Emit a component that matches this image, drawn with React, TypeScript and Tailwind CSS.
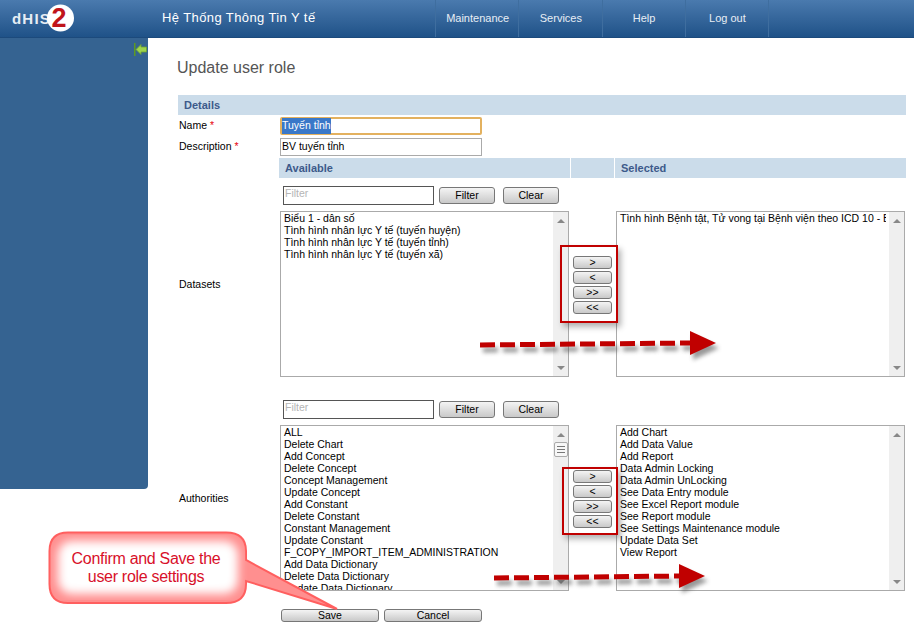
import React from 'react';

const datasetsAvailable = [
  'Biểu 1 - dân số',
  'Tình hình nhân lực Y tế (tuyến huyện)',
  'Tình hình nhân lực Y tế (tuyến tỉnh)',
  'Tình hình nhân lực Y tế (tuyến xã)',
];
const datasetsSelected = ['Tình hình Bệnh tật, Tử vong tại Bệnh viện theo ICD 10 - Bệnh viện'];
const authoritiesAvailable = [
  'ALL',
  'Delete Chart',
  'Add Concept',
  'Delete Concept',
  'Concept Management',
  'Update Concept',
  'Add Constant',
  'Delete Constant',
  'Constant Management',
  'Update Constant',
  'F_COPY_IMPORT_ITEM_ADMINISTRATION',
  'Add Data Dictionary',
  'Delete Data Dictionary',
  'Update Data Dictionary',
  'Add Data Element',
];
const authoritiesSelected = [
  'Add Chart',
  'Add Data Value',
  'Add Report',
  'Data Admin Locking',
  'Data Admin UnLocking',
  'See Data Entry module',
  'See Excel Report module',
  'See Report module',
  'See Settings Maintenance module',
  'Update Data Set',
  'View Report',
];
const navItems = ['Maintenance', 'Services', 'Help', 'Log out'];

// old style grey button
const GreyButton = ({ label, className }: { label: string; className: string }) => (
  <button className={`flex items-center justify-center rounded-[3px] border border-[#777] bg-gradient-to-b from-[#f4f4f4] to-[#c9c9c9] text-[10.5px] leading-none text-black ${className}`}>
    {label}
  </button>
);

const ListBox = ({ items, thumb }: { items: string[]; thumb?: boolean }) => (
  <div className="flex h-[166px] w-[289px] overflow-hidden border border-[#aaa] bg-white">
    <div className="mr-[3px] min-w-0 flex-1 overflow-hidden whitespace-nowrap pl-[3px] text-[10.5px] leading-[12px] text-black">
      {items.map((item) => (
        <div key={item}>{item}</div>
      ))}
    </div>
    <div className="flex w-[15px] shrink-0 flex-col items-center bg-[#efefef] pt-[7px] pb-[6px]">
      <div className="h-0 w-0 border-x-[4px] border-b-[4px] border-x-transparent border-b-[#888]" />
      {thumb && (
        <div className="mt-[5px] flex h-[15px] w-[14px] flex-col items-center justify-center gap-[2px] rounded-[2px] border border-[#aaa] bg-[#f7f7f7]">
          <div className="h-px w-[8px] bg-[#777]" />
          <div className="h-px w-[8px] bg-[#777]" />
          <div className="h-px w-[8px] bg-[#777]" />
        </div>
      )}
      <div className="mt-auto h-0 w-0 border-x-[4px] border-t-[4px] border-x-transparent border-t-[#888]" />
    </div>
  </div>
);

const MoveButtons = () => (
  <div className="flex flex-col gap-[2px]">
    {['>', '<', '>>', '<<'].map((label) => (
      <GreyButton key={label} label={label} className="h-[13px] w-[39px]" />
    ))}
  </div>
);

const FilterRow = () => (
  <div className="flex items-start pl-[3px]">
    <div className="h-[19px] w-[151px] border border-[#555] bg-white pl-[1px] text-[10.5px] leading-[12px] text-[#b5b5b5]">Filter</div>
    <GreyButton label="Filter" className="ml-[5px] mt-[1px] h-[17px] w-[56px]" />
    <GreyButton label="Clear" className="ml-[8px] mt-[1px] h-[17px] w-[56px]" />
  </div>
);

const DashedArrow = ({ width }: { width: number }) => {
  const dashEnd = width - 24;
  return (
    <svg width={width + 10} height="38" viewBox={`0 0 ${width + 10} 38`}>
      <g opacity="0.6" transform="translate(3 5)" style={{ filter: 'blur(2px)' }}>
        <line x1="0" y1="16" x2={dashEnd} y2="14" stroke="#555" strokeWidth="5" strokeDasharray="15 5" />
        <polygon points={`${width - 26},2 ${width},14 ${width - 26},26`} fill="#555" />
      </g>
      <line x1="0" y1="16" x2={dashEnd} y2="14" stroke="#c00000" strokeWidth="5" strokeDasharray="15 5" />
      <polygon points={`${width - 26},2 ${width},14 ${width - 26},26`} fill="#c00000" />
    </svg>
  );
};

const App = () => {
  return (
    <div className="relative h-[626px] w-[914px] overflow-hidden bg-white font-['Liberation_Sans',Arial,sans-serif]">
      <header className="flex h-[38px] border-b border-[#1c4a7c] bg-gradient-to-b from-[#4a7aae] to-[#1f5288] text-white">
        <div className="relative w-[162px] shrink-0">
          <span className="absolute left-[12px] top-[11px] text-[15px] font-bold leading-none tracking-[1.2px] text-[#e6edf4]">dHIS</span>
          <svg className="absolute left-[44px] top-[3px] overflow-visible" width="30" height="30" viewBox="0 0 30 30">
            <circle cx="16.5" cy="15" r="13.5" fill="#fff" />
            <text x="15" y="24" textAnchor="middle" fontFamily="Liberation Sans" fontWeight="bold" fontSize="27" fill="#c0141a">2</text>
          </svg>
        </div>
        <div className="w-[273px] shrink-0 pt-[11px] text-[13px] leading-[14px] tracking-[0.4px]">Hệ Thống Thông Tin Y tế</div>
        <nav className="flex border-l border-[#3f6e9f]">
          {navItems.map((item) => (
            <div key={item} className="flex w-[83.25px] items-center justify-center border-r border-[#3f6e9f] pb-[1px] pl-[1px] text-[11px] text-[#e8eef5]">
              {item}
            </div>
          ))}
        </nav>
      </header>

      <div className="flex">
        <aside className="relative h-[451px] w-[148px] shrink-0 rounded-br-[4px] bg-[#356391]">
          <svg className="absolute left-[134px] top-[5px]" width="13" height="13" viewBox="0 0 13 13">
            <rect x="0" y="0" width="1.5" height="13" fill="#5c9a22" />
            <polygon points="2,6.5 7,1.5 7,4 12.5,4 12.5,9 7,9 7,11.5" fill="#9fd44e" stroke="#6fa52e" strokeWidth="0.8" />
          </svg>
        </aside>

        <main className="min-w-0 flex-1 pl-[30px] text-[10.5px] text-black">
          <h1 className="-ml-px pt-[21px] text-[16px] leading-[18px] text-[#555]">Update user role</h1>
          <div className="mt-[18px] h-[20px] w-[728px] bg-[#cbdcea] pl-[6px] text-[11px] font-bold leading-[20px] text-[#3d5a8a]">Details</div>

          <div className="mt-[2px] flex items-center">
            <div className="w-[102px] pl-[1px]">Name <span className="text-red-600">*</span></div>
            <div className="flex h-[18px] w-[202px] items-center rounded-[2px] border-2 border-[#e3b15f] bg-white">
              <span className="bg-[#3a78c8] text-white">Tuyến tỉnh</span>
            </div>
          </div>
          <div className="mt-[3px] flex items-center">
            <div className="w-[102px] pl-[1px]">Description <span className="text-red-600">*</span></div>
            <div className="flex h-[18px] w-[202px] items-center border border-[#aaa] bg-white pl-[1px]">BV tuyến tỉnh</div>
          </div>

          <div className="mt-[2px] ml-[101px] flex h-[20px] w-[627px] gap-[1px] text-[11px] font-bold leading-[20px] text-[#3d5a8a]">
            <div className="w-[291px] bg-[#cbdcea] pl-[6px]">Available</div>
            <div className="w-[43px] bg-[#cbdcea]" />
            <div className="flex-1 bg-[#cbdcea] pl-[6px]">Selected</div>
          </div>

          <section className="ml-[102px] mt-[8px] w-[626px]">
            <FilterRow />
            <div className="mt-[6px] flex w-[625px]">
              <ListBox items={datasetsAvailable} />
              <div className="flex w-[47px] justify-center pt-[45px]"><MoveButtons /></div>
              <ListBox items={datasetsSelected} />
            </div>
          </section>

          <section className="ml-[102px] mt-[23px] w-[626px]">
            <FilterRow />
            <div className="mt-[6px] flex w-[625px]">
              <ListBox items={authoritiesAvailable} thumb />
              <div className="flex w-[47px] justify-center pt-[45px]"><MoveButtons /></div>
              <ListBox items={authoritiesSelected} />
            </div>
          </section>

          <div className="ml-[103px] mt-[18px] flex gap-[5px]">
            <GreyButton label="Save" className="h-[13px] w-[98px]" />
            <GreyButton label="Cancel" className="h-[13px] w-[98px]" />
          </div>
        </main>
      </div>

      {/* row labels sit beside the tall list rows */}
      <div className="absolute left-[179px] top-[278px] text-[10.5px] leading-[13px] text-black">Datasets</div>
      <div className="absolute left-[179px] top-[492px] text-[10.5px] leading-[13px] text-black">Authorities</div>

      {/* annotations drawn over the screenshot */}
      <div className="absolute left-[560px] top-[245px] h-[78px] w-[58px] border-2 border-[#c00000] shadow-[3px_4px_6px_rgba(0,0,0,0.3)]" />
      <div className="absolute left-[562px] top-[467px] h-[68px] w-[56px] border-2 border-[#c00000] shadow-[3px_4px_6px_rgba(0,0,0,0.3)]" />
      <div className="absolute left-[480px] top-[329px]"><DashedArrow width={236} /></div>
      <div className="absolute left-[494px] top-[562px]"><DashedArrow width={211} /></div>

      <div className="absolute left-[48px] top-[531px] h-[82px] w-[292px]">
        <svg width="292" height="82" viewBox="0 0 292 82">
          <defs>
            <filter id="calloutGlow" x="-10%" y="-10%" width="120%" height="120%">
              <feGaussianBlur stdDeviation="5" />
            </filter>
            <clipPath id="calloutClip">
              <path d="M20 1.5 H178 Q198 1.5 198 20 V29 L289 78 L198 50 V53 Q198 72 178 72 H20 Q1.5 72 1.5 53 V20 Q1.5 1.5 20 1.5 Z" />
            </clipPath>
          </defs>
          <path d="M20 1.5 H178 Q198 1.5 198 20 V29 L289 78 L198 50 V53 Q198 72 178 72 H20 Q1.5 72 1.5 53 V20 Q1.5 1.5 20 1.5 Z" fill="#ff8f8f" stroke="#ff5f5f" strokeWidth="2" />
          <g clipPath="url(#calloutClip)">
            <rect x="10" y="10" width="180" height="53" rx="14" fill="#fff" filter="url(#calloutGlow)" />
          </g>
        </svg>
        <div className="absolute -left-px top-[19px] w-[198px] text-center text-[16px] leading-[18px] tracking-[-0.3px] text-[#d8102a]">
          Confirm and Save the<br />user role settings
        </div>
      </div>
    </div>
  );
};

export default App;
